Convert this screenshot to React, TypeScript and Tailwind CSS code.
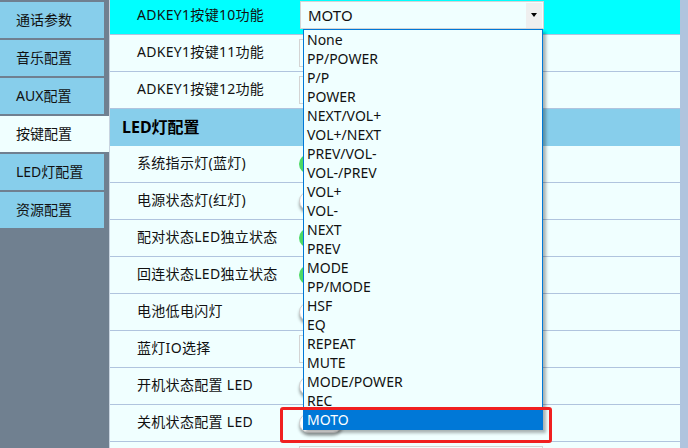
import React from 'react'

const FONT = { fontFamily: '"Noto Sans", "Noto Sans CJK SC", sans-serif' }

const navItems = ['通话参数', '音乐配置', 'AUX配置', '按键配置', 'LED灯配置', '资源配置']
const ACTIVE_NAV = '按键配置'

const options = [
  'None', 'PP/POWER', 'P/P', 'POWER', 'NEXT/VOL+', 'VOL+/NEXT', 'PREV/VOL-', 'VOL-/PREV',
  'VOL+', 'VOL-', 'NEXT', 'PREV', 'MODE', 'PP/MODE', 'HSF', 'EQ', 'REPEAT', 'MUTE',
  'MODE/POWER', 'REC', 'MOTO',
]

type Row = { label: string; kind: 'select' | 'on' | 'off' }

const ledRows: Row[] = [
  { label: '系统指示灯(蓝灯)', kind: 'on' },
  { label: '电源状态灯(红灯)', kind: 'off' },
  { label: '配对状态LED独立状态', kind: 'on' },
  { label: '回连状态LED独立状态', kind: 'on' },
  { label: '电池低电闪灯', kind: 'off' },
  { label: '蓝灯IO选择', kind: 'select' },
  { label: '开机状态配置 LED', kind: 'off' },
  { label: '关机状态配置 LED', kind: 'off' },
  // 下一行只露出选择框的上沿
  { label: '', kind: 'select' },
]

const SelectBox = ({ value }: { value?: string }) => (
  <div className="flex h-[28px] w-[244px] items-center border border-[#d4d4d4] bg-[#f0ffff]">
    <span className="flex-1 pl-[7px] text-[15px] text-[#111]">{value}</span>
    <div className="mr-[1px] flex h-[25px] w-[16px] items-center justify-center bg-[#efefef]">
      <div className="h-0 w-0 border-x-[3.5px] border-t-[4px] border-x-transparent border-t-black" />
    </div>
  </div>
)

const Toggle = ({ on }: { on: boolean }) =>
  on ? (
    <div className="h-[20px] w-[44px] rounded-full bg-[#4cd964]" />
  ) : (
    <div className="h-[20px] w-[44px] rounded-full border border-[#d0d0d0] bg-white shadow-[0_3px_3px_rgba(0,0,0,0.35)]" />
  )

const SettingRow = ({ label, kind }: Row) => (
  <div className="flex h-[37px] items-center border-b border-[#b0c4de]">
    <span className="w-[189px] pb-[3px] pl-[27px] text-[14px] tracking-[0.3px] text-[#111]">{label}</span>
    {kind === 'select' && <SelectBox />}
    {kind === 'on' && <Toggle on />}
    {kind === 'off' && <Toggle on={false} />}
  </div>
)

export default function App() {
  return (
    <div className="relative flex h-[448px] w-[688px] overflow-hidden bg-[#708090]" style={FONT}>
      {/* 左侧菜单 */}
      <div className="flex w-[109px] flex-col gap-[2px] pt-[2px]">
        {navItems.map((item) => {
          const active = item === ACTIVE_NAV
          return (
            <div
              key={item}
              className={`flex h-[36px] items-center pb-[1px] pl-[16px] text-[14px] text-[#111] ${
                active ? 'w-[109px] bg-[#f0ffff]' : 'w-[104px] bg-[#87ceeb]'
              }`}
            >
              {item}
            </div>
          )
        })}
      </div>

      {/* 主内容 */}
      <div className="flex-1 border-l border-[#c8d4e0] bg-[#f0ffff]">
        <div className="-mt-[2px]">
          <div className="flex h-[37px] items-center border-b border-[#b0c4de] bg-[#00ffff]">
            <span className="w-[189px] pb-[3px] pl-[27px] text-[14px] tracking-[0.3px] text-[#111]">ADKEY1按键10功能</span>
            <div className="-mt-[2px] ml-[1px]">
              <SelectBox value="MOTO" />
            </div>
          </div>
          <SettingRow label="ADKEY1按键11功能" kind="select" />
          <SettingRow label="ADKEY1按键12功能" kind="select" />
          <div className="flex h-[37px] items-center bg-[#87ceeb] pb-[2px] pl-[12px] text-[16px] font-bold text-black">
            LED灯配置
          </div>
          {ledRows.map((r, i) => (
            <SettingRow key={i} {...r} />
          ))}
        </div>
      </div>

      {/* 滚动条 */}
      <div className="w-[8px] bg-[#b0c4de]" />

      {/* 下拉列表 */}
      <div className="absolute left-[303px] top-[29px] w-[240px] border border-[#0078d7] bg-[#f0ffff] shadow-[3px_3px_3px_rgba(0,0,0,0.3)]">
        {options.map((opt) => (
          <div
            key={opt}
            className={`flex h-[19px] items-center pl-[3px] text-[14px] ${
              opt === 'MOTO' ? 'bg-[#0078d7] text-white' : 'text-[#111]'
            }`}
          >
            {opt}
          </div>
        ))}
      </div>

      {/* 红框标注 */}
      <div className="absolute left-[280px] top-[407px] h-[36px] w-[272px] rounded-[3px] border-[3px] border-[#f02020]" />
    </div>
  )
}
